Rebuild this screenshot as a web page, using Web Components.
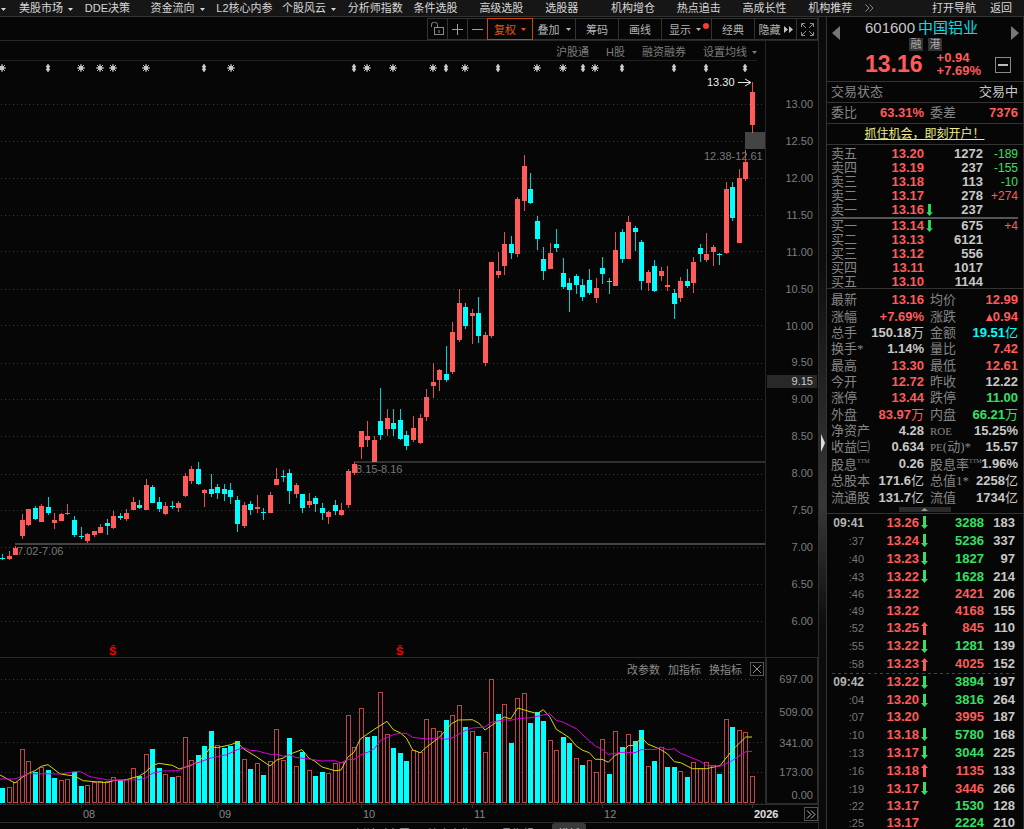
<!DOCTYPE html>
<html lang="zh-CN">
<head>
<meta charset="utf-8">
<title>601600 中国铝业</title>
<style>
html,body{margin:0;height:100%;background:#060606;overflow:hidden}
body{font-family:"Liberation Sans","Noto Sans CJK SC",sans-serif;font-size:11px;color:#c8c8c8;
--line:#2c2c2c;--red:#ff5b5b;--green:#33e066;--cyan:#00ffff;--dim:#858585}
</style>
</head>
<body>
<stock-app></stock-app>
<script>
const BASE=`*{box-sizing:border-box}button{font:inherit;color:inherit;background:none;border:0;padding:0;margin:0;white-space:nowrap;cursor:pointer}
table{border-collapse:collapse;table-layout:fixed;width:100%}td,th{padding:0;font-weight:400;white-space:nowrap}
.r{color:var(--red)}.g{color:var(--green)}.c{color:var(--cyan)}`;
function define(name,css,html){
  customElements.define(name,class extends HTMLElement{
    constructor(){super();
      this.attachShadow({mode:'open'}).innerHTML=`<style>${BASE}${css}</style>`+(typeof html==='function'?html():html);
    }
  });
}
const CARET='<svg class="caret" width="5" height="3" aria-hidden="true"><path d="M0 0h5L2.500 3z" fill="currentColor"/></svg>';
const STEP=6.519,X0=2.3,xAt=i=>Math.round(X0+STEP*i);
const arrow=(up)=>`<svg class="arw" width="7" height="13" viewBox="0 0 7 13" aria-hidden="true"><path d="${up?'M3.500 0L7 4H5v9H2V4H0z':'M3.500 13L0 9h2V0h3v9h2z'}" fill="${up?'#ff5b5b':'#33e066'}"/></svg>`;

/* ---------- top menu ---------- */
define('top-menu',`:host{display:flex;height:17px;background:#161616;border-bottom:1px solid #333;color:#d8d8d8}
.lead{width:19px;padding-left:1px;text-align:left}
nav{flex:0 1 855px;display:grid;grid-template-columns:repeat(13,1fr)}
nav>span{display:flex;align-items:center;min-width:0}
button{line-height:16px}.caret{margin-left:5px;vertical-align:middle}.lead .caret{margin-left:0}
.more{margin-left:13px;color:#8a8a8a;display:flex}
.right{flex:1;display:flex;justify-content:flex-end;gap:14px;padding-right:12px}`,
()=>`<button class="lead" aria-label="更多">${CARET}</button><nav>`+
['美股市场*','DDE决策','资金流向*','L2核心内参','个股风云*','分析师指数','条件选股','高级选股','选股器','机构增仓','热点追击','高成长性','机构推荐']
.map((t,i)=>`<span><button>${t.replace('*',CARET)}</button>${i==12?'<button class="more" aria-label="展开"><svg width="9" height="8"><path d="M.5.5L4 4 .5 7.500M4.500.5L8 4 4.500 7.500" fill="none" stroke="currentColor"/></svg></button>':''}</span>`).join('')+
`</nav><div class="right"><button>打开导航</button><button>返回</button></div>`);

/* ---------- toolbar ---------- */
define('chart-toolbar',`:host{display:flex;justify-content:flex-end;height:24px;padding:1px 0 0;border-bottom:1px solid #262626;color:#b4b4b4}
button{height:22px;border:1px solid #333;margin-left:-1px;display:flex;align-items:center;justify-content:center;position:relative}
.i{width:21px}.m{width:44px}.on{width:46px;border-color:#c8460c;color:#e8590f;z-index:1}.caret{margin-left:6px}
.on .caret{margin-left:5px}.d{width:51px}.d::after{content:"";position:absolute;right:2px;top:4px;width:6px;height:6px;border-radius:3px;background:#ff3b30}.d .caret{margin-left:5px;margin-right:3px}
.f{gap:3px;width:43px}.x{width:22px}`,
`<button class="i" aria-label="锁定"><svg width="13" height="14" fill="none" stroke="#8a8a8a"><rect x="3.500" y="5.500" width="9" height="7"/><path d="M.5 5V3.500a3 3 0 0 1 6-1V5M8 8v3"/></svg></button>
<button class="i" aria-label="放大"><svg width="11" height="11" stroke="#a0a0a0"><path d="M0 5.500h11M5.500 0v11"/></svg></button>
<button class="i" aria-label="缩小"><svg width="11" height="11" stroke="#a0a0a0"><path d="M0 5.500h11"/></svg></button>
<button class="on">复权${CARET}</button><button class="m">叠加${CARET}</button><button class="m">筹码</button><button class="m">画线</button>
<button class="d">显示${CARET}</button><button class="m">经典</button>
<button class="f">隐藏<svg width="9" height="7" fill="#c0c0c0"><path d="M0 0l4 3.500L0 7zM5 0l4 3.500L5 7z"/></svg></button>
<button class="x" aria-label="全屏"><svg width="13" height="13" fill="none" stroke="#909090"><path d="M.5 4V.5H4M9 .5h3.500V4M12.500 9v3.500H9M4 12.500H.5V9M1 1l4 4M12 1L8 5M12 12L8 8M1 12l4-4"/></svg></button>`);

define('chart-links',`:host{display:flex;height:20px}
div{flex:1;display:flex;justify-content:flex-end;align-items:center;color:#7d7d7d;border-bottom:1px solid #202020;margin-right:8px;gap:17px}
i{width:53px;border-left:1px solid #262626}.caret{margin-left:5px;vertical-align:middle}`,
`<div><button>沪股通</button><button>H股</button><button>融资融券</button><button>设置均线${CARET}</button></div><i></i>`);

/* ---------- price chart ---------- */
/* colour, body top, body bottom, wick top, wick bottom */
const CANDLES=`c558 559 554 560|r556 559 551 560|r548 555 546 555|r520 536 514 539|r509 525 509 526|c508 519 506 520|r506 522 504 522|c507 513 497 515|r520 523 513 529|r514 521 513 521|r513 514 504 515|c520 535 516 537|c536 537 527 539|r534 541 533 543|r531 535 531 537|r527 533 524 533|c523 526 519 535|r516 528 511 529|c516 518 513 520|r513 519 509 521|r502 510 497 510|c505 508 500 509|r485 510 479 510|c487 503 485 503|c502 509 497 512|r506 514 502 515|c506 507 501 509|r503 508 501 512|r476 496 473 497|r469 481 466 484|c469 484 462 485|r490 493 489 507|c489 494 474 497|c487 493 484 499|c489 494 484 501|c490 497 483 504|c500 524 496 532|r505 526 502 528|c504 510 501 515|r507 509 495 513|c512 513 508 520|r495 513 492 513|r479 485 468 485|c476 477 470 482|c473 491 469 504|r485 494 483 498|c494 508 494 513|r501 505 493 508|c498 504 496 512|c508 513 503 520|r512 517 511 524|c505 511 500 515|r510 515 503 516|r471 505 469 508|r464 473 462 475|r431 447 431 459|r436 440 421 447|r440 462 436 462|c421 435 388 440|r418 429 409 436|c423 429 409 436|c420 439 409 440|c435 446 431 450|r428 440 416 442|r418 443 414 444|r397 417 389 421|r382 386 363 398|r370 380 369 391|c374 380 346 382|r332 372 322 374|r303 340 289 342|c307 326 303 329|r313 316 309 344|c313 336 297 343|r335 363 332 366|r262 336 262 338|r271 275 252 278|r244 266 232 275|c244 253 236 259|r199 254 197 257|r166 201 155 211|c189 203 173 204|c221 239 216 250|c259 271 247 280|r253 269 243 269|c244 248 229 252|c273 287 258 289|c283 290 278 312|c276 285 274 294|c285 297 279 301|c280 293 269 295|r288 298 278 303|c268 274 257 284|c281 282 278 294|r250 286 232 286|c232 259 229 263|r222 259 216 259|c228 232 226 251|c242 281 240 290|r272 283 270 291|c266 291 260 292|r271 276 267 281|r285 287 266 291|c293 304 289 319|r281 298 277 302|c281 286 269 288|r262 283 257 293|c248 254 244 262|r254 260 233 262|r247 252 245 266|c254 255 253 265|r189 253 182 254|c187 218 182 221|r178 243 169 243|r162 179 150 181|r92 125 82 133`.split('|');
const PLOT_TOP=61,PLOT_H=596,PLOT_W=765;
const pos=(x,y)=>`left:${(x/PLOT_W*100).toFixed(3)}%;top:${((y-PLOT_TOP)/PLOT_H*100).toFixed(3)}%`;
function priceSvg(){
  let s='';
  for(const y of [104,141,178,215,251,289,325,363,399,436,474,510,547,584,621])
    s+=`<path d="M1 ${y}.5H765" stroke="#3a3a3a" stroke-dasharray="1 3"/>`;
  s+='<path d="M15 544H765" stroke="#444" stroke-width="2"/><path d="M354 462H765" stroke="#303030" stroke-width="2"/><rect x="745" y="132" width="20" height="17" fill="#444"/>';
  CANDLES.forEach((c,i)=>{
    const [bt,bb,wt,wb]=c.slice(1).split(' ').map(Number),x=xAt(i),up=c[0]=='r';
    s+=`<rect x="${x}" y="${wt}" width="1" height="${wb-wt}" fill="${up?'#e05050':'#00d0d0'}"/><rect x="${x-2}" y="${bt}" width="5" height="${Math.max(1,bb-bt)}" fill="${up?'#ff5b5b':'#0ff'}"/>`;
  });
  for(const x of [2,81,100,113,146,231,367,393,433,465,537,563,595])
    s+=`<g transform="translate(${x} 68)" stroke="#c8c8c8" shape-rendering="auto"><path d="M0-4V4M-4 0H4M-3-3L3 3M3-3L-3 3"/><circle r="2" fill="#c8c8c8"/></g>`;
  for(const x of [48,204,354,446,498,583,622,674,706,745])
    s+=`<path transform="translate(${x} 68)" d="M0-4L2-1H1V1H2L0 4-2 1H-1V-1H-2z" fill="#d0d0d0" stroke="#d0d0d0" stroke-width=".5" shape-rendering="auto"/>`;
  s+='<path d="M738 82.500H750M745 79L751 82.500 745 86" fill="none" stroke="#eee" shape-rendering="auto"/>';
  return `<svg viewBox="0 61 765 596" preserveAspectRatio="none" shape-rendering="crispEdges" aria-hidden="true">${s}</svg>`;
}
define('price-chart',`:host{display:flex;flex:1;min-height:0;border-bottom:1px solid #2a2a2a}
.plot{flex:1;min-width:0;position:relative}svg{display:block;width:100%;height:100%;position:absolute}
.plot span{position:absolute;line-height:12px;margin-top:-6px;color:#777;white-space:nowrap}
.plot .hi{color:#eee}.plot .s{color:#f00;font-weight:700;margin-left:-4px}
.axis{width:53px;border-left:1px solid #262626;padding:25px 5px 18px 0;display:grid;grid-template-rows:repeat(15,1fr);align-items:center;text-align:right;color:#7d7d7d;position:relative}
.now{position:absolute;left:1px;right:1px;top:53%;height:13px;line-height:13px;background:#282828;color:#c8c8c8;padding-right:4px;margin-top:-2px}`,
()=>`<div class="plot">${priceSvg()}
<span class="hi" style="${pos(707,82)}">13.30</span><span style="${pos(704,156)}">12.38-12.61</span>
<span style="${pos(356,469)}">8.15-8.16</span><span style="${pos(17,551)}">7.02-7.06</span>
<span class="s" style="${pos(113,651)}">Ŝ</span><span class="s" style="${pos(400,651)}">Ŝ</span></div>
<div class="axis">${Array.from({length:15},(_,i)=>`<span>${(13-i/2).toFixed(2)}</span>`).join('')}<div class="now">9.15</div></div>`);

/* ---------- volume chart: tops are thirds of a unit below 640 ---------- */
const VOL='c443 r441 r427 r328 r364 c396 r381 c391 c413 r421 r417 c396 c437 r435 r425 r424 r422 r411 c420 r417 r384 c408 r343 c328 c384 r402 c410 r408 r290 r361 c345 c319 c273 r316 c325 c319 c304 r358 c387 r370 c405 r364 r268 r361 c294 r378 c336 r390 c408 c397 r400 r370 r367 r224 r321 r203 c290 c287 r156 r283 c323 c339 c364 r331 r337 r238 r265 r273 c241 r224 r195 c262 r273 c287 r337 r118 c222 r191 c309 r175 r159 c249 c216 c243 r300 r331 c290 c309 r354 c376 r359 r397 r298 c403 r274 c320 r283 c304 c271 r379 c362 r322 c380 c380 r392 c411 r367 r383 r367 r374 c403 r236 c260 r271 r277 r408'.split(' ');
const LINES={
'#d8d800':[[0,'0,405 45,429 67,412 86,400 105,392 124,379 144,374 181,402 223,408 250,422 319,428 345,421 375,420 418,408 437,396 457,377 476,370 517,376 538,387 574,376 594,365 613,348 632,320 652,323 692,314 712,307 731,327 769,350 810,378 830,360 850,354 868,343'],
[290,'36,329 56,354 75,364 96,381 135,392 153,390 173,352 192,337 211,297 253,268 291,244 310,269 330,278 349,294 368,330 391,338 409,322 448,292 486,250 505,240 547,239 566,249 585,270 604,257 643,231 662,237 683,204 741,221 760,209 779,230 799,268'],
[560,'8,280 29,294 49,318 68,331 88,338 106,358 126,358 145,367 164,347 186,337 205,317 225,316 244,292 263,312 301,328 323,342 343,365 362,368 397,386 439,386 480,377 518,329 557,291 576,291']],
'#d800d8':[[0,'0,417 45,417 86,401 181,402 223,395 242,395 270,410 319,419 350,421 418,419 437,414 457,400 490,393 538,392 556,380 594,368 632,354 652,350 680,344 712,329 731,323 750,331 769,332 810,343 830,343 850,349 868,344'],
[290,'16,352 56,357 96,363 135,362 153,369 173,358 192,359 211,345 235,336 253,326 272,301 310,284 330,280 349,280 368,292 409,297 448,293 467,298 486,294 525,272 547,264 585,261 604,247 643,239 662,241 683,236 722,233 779,221 799,241'],
[560,'8,246 49,266 88,303 106,318 126,328 145,343 186,337 225,338 244,329 290,328 301,321 323,329 343,326 362,340 419,363 439,376 480,379 510,366 557,335 576,334']]};
function volSvg(){
  let s='';
  for(const y of [679,712,742,772,803])s+=`<path d="M1 ${y}.5H765" stroke="#3a3a3a" stroke-dasharray="1 3"/>`;
  VOL.forEach((v,i)=>{const x=xAt(i),t=Math.round(640+v.slice(1)/3);
    s+=v[0]=='c'?`<rect x="${x-2}" y="${t}" width="5" height="${803-t}" fill="#0ff"/>`
      :`<rect x="${x-2+.5}" y="${t+.5}" width="4" height="${802-t}" fill="#060606" stroke="#c04646"/>`;});
  for(const k in LINES){const p=LINES[k].map(([o,q])=>q.split(' ').map(a=>{const [x,y]=a.split(',');return (o+x/3).toFixed(1)+','+(640+y/3).toFixed(1)}).join(' ')).join(' ');
    s+=`<polyline points="${p}" fill="none" stroke="${k}" shape-rendering="auto"/>`;}
  return `<svg class="p" viewBox="0 658 765 146" preserveAspectRatio="none" shape-rendering="crispEdges" aria-hidden="true">${s}</svg>`;
}
define('volume-chart',`:host{display:flex;height:146px}
.plot{flex:1;min-width:0;position:relative}.p{position:absolute;width:100%;height:100%}
.tools{position:relative;display:flex;justify-content:flex-end;align-items:center;gap:8px;height:21px;padding-right:1px;color:#8a8a8a}
.x{border:1px solid #555;width:14px;height:14px;display:flex;align-items:center;justify-content:center}
.axis{width:53px;border:1px solid #2c2c2c;border-width:0 1px 1px 2px;padding:5px 4px 0 0;display:grid;grid-template-rows:32fr 33fr 29fr 30fr 16fr;align-items:center;text-align:right;color:#7d7d7d}`,
()=>`<div class="plot">${volSvg()}<div class="tools"><button>改参数</button><button>加指标</button><button>换指标</button><button class="x" aria-label="关闭"><svg width="8" height="8" stroke="#999"><path d="M0 0l8 8M8 0L0 8"/></svg></button></div></div>
<div class="axis"><span>697.00</span><span>509.00</span><span>341.00</span><span>173.00</span><span>0.00</span></div>`);

define('time-axis',`:host{display:flex;height:19px;border-top:1px solid #2c2c2c;border-bottom:1px solid #2c2c2c;color:#858585}
div{flex:1;position:relative}span{position:absolute;line-height:19px;padding-left:2px;height:17px}
span::before{content:"";position:absolute;left:0;top:0;width:1px;height:3px;background:#333}
.y{color:#e0e0e0;font-weight:700}button{width:14px;height:14px;border:1px solid #555;margin:2px 0 0;display:flex;align-items:center;justify-content:center}`,
()=>'<div>'+[[81,'08'],[217,'09'],[361,'10'],[472,'11'],[602,'12'],[752,'2026']].map(([x,t])=>`<span class="${t=='2026'?'y':''}" style="left:${(x/804*100).toFixed(2)}%">${t}</span>`).join('')+
'</div><button aria-label="后移"><svg width="10" height="9" fill="none" stroke="#bbb"><path d="M1 .5l4 4-4 4M5 .5l4 4-4 4"/></svg></button>');

define('indicator-tabs',`:host{display:flex;height:6px;overflow:hidden;padding-left:6px;gap:18px;color:#9a9a9a}
button{height:20px;line-height:14px;padding-top:1px;flex:none}.on{background:#3a3a3a;color:#ddd;border-radius:3px;padding:1px 6px 0}`,
['BIAS','CCI','DMI','KDJ','CR','PSY','VR','EMV','TRIX','倒计时主图','注意力指','工具指标'].map(t=>`<button>${t}</button>`).join('')+'<button class="on">模板</button>');

/* ---------- side panel ---------- */
define('quote-head',`:host{display:block;color:#c8c8c8}
.h{height:65px;display:grid;grid-template-columns:8px 1fr 8px;grid-template-rows:34px 30px;border-bottom:1px solid #333;padding:0 4px 0 5px}
.h>button{height:33px}.mid{text-align:center;padding-right:8px}
h1{font-size:15px;font-weight:400;line-height:20px;margin:0;padding-top:1px}h1 b{font-weight:400;color:#00e0e8;margin-left:3px}
.tags{display:flex;gap:5px;justify-content:center;height:13px;padding-left:8px}.tags span{background:#333;color:#aaa;width:14px;height:13px;line-height:13px}
.p{grid-column:1/4;display:flex;color:var(--red);font-weight:700;padding-left:33px}.p strong{font-size:23px;line-height:26px;margin-right:14px}
.p div{font-size:13px;line-height:13px;text-align:left}
.min{margin:6px 8px 0 auto;width:16px;height:16px;border:1px solid #888;display:flex;align-items:center;justify-content:center}
.row{display:flex;height:21px;line-height:20px;font-size:13px;border-bottom:1px solid #333;padding:0 5px 0 4px}
.row span{color:var(--dim)}.row b{color:var(--red)}.row.s{justify-content:space-between}
.w b:nth-child(2){width:67px;text-align:right;margin-right:6px}.w b:last-child{margin-left:auto}
.l{justify-content:center}a{color:#eded8c;font-size:12px}`,
`<div class="h"><button aria-label="上一只"><svg width="8" height="14"><path d="M8 0v14L0 7z" fill="#777"/></svg></button>
<div class="mid"><h1>601600<b>中国铝业</b></h1><div class="tags"><span>融</span><span>港</span></div></div>
<button aria-label="下一只"><svg width="8" height="14"><path d="M0 0v14l8-7z" fill="#777"/></svg></button>
<div class="p"><strong>13.16</strong><div>+0.94<br>+7.69%</div><button class="min" aria-label="收起"><svg width="10" height="2"><path d="M0 1h10" stroke="#bbb" stroke-width="2"/></svg></button></div></div>
<div class="row s"><span>交易状态</span><div>交易中</div></div>
<div class="row w"><span>委比</span><b>63.31%</b><span>委差</span><b>7376</b></div>
<div class="row l"><a href="#open">抓住机会，即刻开户！</a></div>`);

const half=(rows)=>`<table><colgroup><col style="width:37px"><col style="width:56px"><col style="width:10px"><col style="width:49px"><col></colgroup>`+
rows.map(([l,p,a,v,d])=>`<tr><th scope="row">${l}</th><td class="r b">${p}</td><td>${a?arrow(false):''}</td><td class="b">${v}</td><td class="d ${d[0]=='-'?'g':'r'}">${d}</td></tr>`).join('')+'</table>';
define('order-book',`:host{display:block;padding:2px 5px 0 4px;font-size:13px;border-bottom:1px solid #333;height:144px}
tr{height:14px}td,th{line-height:14px;height:14px;text-align:right}th{text-align:left;color:var(--dim)}.b{font-weight:700}.d{font-size:12px}
.arw{display:block;margin-left:2px;width:7px;height:12px}hr{border:0;height:2px;background:#555;margin:0}`,
()=>half([['卖五','13.20',0,'1272','-189'],['卖四','13.19',0,'237','-155'],['卖三','13.18',0,'113','-10'],['卖二','13.17',0,'278','+274'],['卖一','13.16',1,'237','']])+'<hr>'+
half([['买一','13.14',1,'675','+4'],['买二','13.13',0,'6121',''],['买三','13.12',0,'556',''],['买四','13.11',0,'1017',''],['买五','13.10',0,'1144','']]));

define('quote-stats',`:host{display:block;padding:3px 5px 0 4px;font-size:13px;border-bottom:1px solid #333;height:225px}
table{height:214px}td,th{line-height:14px}th{text-align:left;color:var(--dim);font-family:"Liberation Serif","Noto Sans CJK SC",serif}
td{font-weight:700;text-align:right}td i{font-style:normal;font-weight:400}th:nth-child(3){padding-left:6px}
sup{font-size:6px;line-height:8px;vertical-align:6px}small{font-size:11px}
.grip{display:flex;align-items:center;justify-content:center;width:52px;height:5px;margin:1px auto 0;background:#2a2a2a;color:#999}`,
()=>{const R=[['最新','r13.16','均价','r12.99'],['涨幅','r+7.69%','涨跌','r▴0.94'],['总手',' 150.18万','金额','c19.51亿'],['换手*',' 1.14%','量比','r7.42'],['最高','r13.30','最低','r12.61'],['今开','r12.72','昨收',' 12.22'],['涨停','r13.44','跌停','g11.00'],['外盘','r83.97万','内盘','g66.21万'],['净资产',' 4.28','<small>ROE</small>',' 15.25%'],['收益㈢',' 0.634','<small>PE</small>(动)*',' 15.57'],['股息<sup>TTM</sup>',' 0.26','股息率<sup>TTM</sup>',' 1.96%'],['总股本',' 171.6亿','总值1*',' 2258亿'],['流通股',' 131.7亿','流值',' 1734亿']];
const v=t=>`<td class="${t[0]}">${t.slice(1).replace('▴','<svg width="7" height="7"><path d="M3.500 0L7 7H0z" fill="#ff5b5b"/></svg>').replace(/[万亿]/,'<i>$&</i>')}</td>`;
return '<table><colgroup><col style="width:39px"><col style="width:54px"><col style="width:47px"><col></colgroup>'+R.map(r=>`<tr><th scope="row">${r[0]}</th>${v(r[1])}<th>${r[2]}</th>${v(r[3])}</tr>`).join('')+`</table><button class="grip" aria-label="折叠"><svg width="7" height="3"><path d="M3.500 0L7 3H0z" fill="currentColor"/></svg></button>`;});

define('tick-list',`:host{display:block;padding:0 8px 0 5px;font-size:13px}
table{height:317px}td,th{line-height:12px;text-align:right;font-weight:700}th{color:#777;font-weight:400;font-size:11px}
.m th{color:#b4b4b4;font-weight:700;font-size:12px}.arw{display:block;margin-left:2px}
tr:nth-child(10){background:repeating-linear-gradient(90deg,#444 0 3px,transparent 3px 6px) 0 0/100% 1px no-repeat}`,
()=>'<table><colgroup><col style="width:32px"><col style="width:55px"><col style="width:10px"><col style="width:55px"><col></colgroup>'+
`09:41 13.26 d g3288 183|:37 13.24 d g5236 337|:40 13.23 d g1827 97|:43 13.22 d g1628 214|:46 13.22 - r2421 206|:49 13.22 - r4168 155|:52 13.25 u r845 110|:55 13.22 d g1281 139|:58 13.23 u r4025 152|09:42 13.22 d g3894 197|:04 13.20 d g3816 264|:07 13.20 - r3995 187|:10 13.18 d g5780 168|:13 13.17 d g3044 225|:16 13.18 u r1135 133|:19 13.17 d r3446 266|:22 13.17 - g1530 128|:25 13.17 - g2224 210`
.split('|').map(l=>{const [t,p,a,v,n]=l.split(' ');return `<tr class="${t[0]=='0'?'m':''}"><th scope="row">${t}</th><td class="r">${p}</td><td>${a=='-'?'':arrow(a=='u')}</td><td class="${v[0]}">${v.slice(1)}</td><td>${n}</td></tr>`}).join('')+'</table>');

define('pane-splitter',`:host{display:flex;align-items:center;width:8px;border-left:1px solid #2e2e2e;background:linear-gradient(#0a0a0a,#0d0d0d 30%,#383838 60%,#0d0d0d 75%,#0a0a0a)}
button{height:18px;margin:40px 0 0 2px}`,
`<button aria-label="展开侧栏"><svg width="4" height="18"><path d="M0 0l4 9-4 9z" fill="#ddd"/></svg></button>`);

define('stock-app',`:host{display:flex;flex-direction:column;height:100vh;overflow:hidden}
main{flex:1;min-height:0;display:flex}.left{flex:1;min-width:0;display:flex;flex-direction:column}
aside{width:198px;border-left:1px solid #333;border-right:1px solid #2a2a2a}`,
`<top-menu></top-menu><main><section class="left"><chart-toolbar></chart-toolbar><chart-links></chart-links><price-chart></price-chart><volume-chart></volume-chart><time-axis></time-axis><indicator-tabs></indicator-tabs></section>
<pane-splitter></pane-splitter><aside><quote-head></quote-head><order-book></order-book><quote-stats></quote-stats><tick-list></tick-list></aside></main>`);
</script>
</body>
</html>
